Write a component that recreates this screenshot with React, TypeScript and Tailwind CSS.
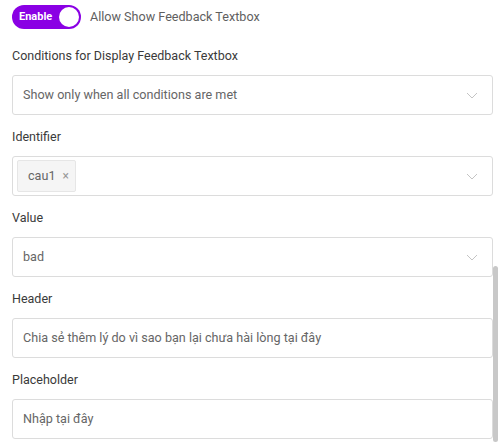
import React from "react";

const Chevron = () => (
  <svg width="12" height="7" viewBox="0 0 12 7" fill="none" className="shrink-0">
    <path d="M1 1l5 5 5-5" stroke="#c4c4c4" strokeWidth="1" />
  </svg>
);

const Label = ({ children }: { children: React.ReactNode }) => (
  <div className="text-[12.5px] leading-5 text-[#3a3a3a] mb-[9px]">{children}</div>
);

const Box = ({ children, select }: { children: React.ReactNode; select?: boolean }) => (
  <div className="h-10 border border-[#dcdcdc] rounded-[3px] bg-white flex items-center pl-[10px] pr-[14px]">
    <div className="flex-1 flex items-center text-[12.6px] text-[#666]">{children}</div>
    {select && <Chevron />}
  </div>
);

export default function App() {
  return (
    <div
      className="relative w-[503px] h-[446px] bg-white overflow-hidden"
      style={{ fontFamily: "Roboto, 'Noto Sans', sans-serif" }}
    >
      <div className="pl-3 pr-[10px] pt-[5px]">
        {/* toggle row */}
        <div className="flex items-center gap-[9px] h-6">
          <div className="w-[69px] h-6 rounded-full bg-[#8a00e4] flex items-center justify-between pl-[7px] pr-[2px]">
            <span className="text-[11px] font-bold text-white">Enable</span>
            <span className="w-5 h-5 rounded-full bg-white"></span>
          </div>
          <span className="text-[12.6px] text-[#5f5f5f]">Allow Show Feedback Textbox</span>
        </div>

        <div className="mt-[17px]">
          <Label>Conditions for Display Feedback Textbox</Label>
          <Box select>Show only when all conditions are met</Box>
        </div>

        <div className="mt-3">
          <Label>Identifier</Label>
          <Box select>
            <span className="-ml-[6px] h-8 pl-[10px] pr-[6px] flex items-center gap-[7px] bg-[#f5f5f5] border border-[#e6e6e6] rounded-[2px]">
              cau1
              <span className="text-[12px] text-[#999] leading-none">×</span>
            </span>
          </Box>
        </div>

        <div className="mt-3">
          <Label>Value</Label>
          <Box select>bad</Box>
        </div>

        <div className="mt-3">
          <Label>Header</Label>
          <Box>Chia sẻ thêm lý do vì sao bạn lại chưa hài lòng tại đây</Box>
        </div>

        <div className="mt-3">
          <Label>Placeholder</Label>
          <Box>Nhập tại đây</Box>
        </div>
      </div>

      {/* scrollbar */}
      <div className="absolute left-[493px] top-[266px] w-[5px] h-[176px] bg-[#c8c8c8] rounded-sm"></div>
    </div>
  );
}
